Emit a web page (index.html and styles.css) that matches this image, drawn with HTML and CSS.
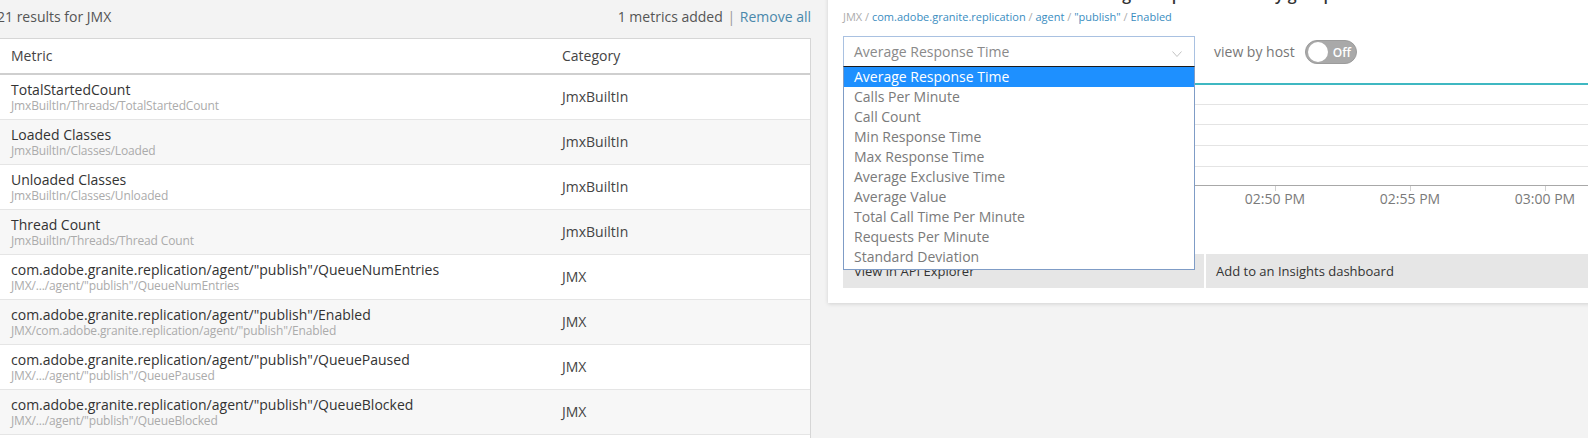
FILE: index.html
```html
<!DOCTYPE html>
<html lang="en">
<head>
<meta charset="utf-8">
<title>Metric explorer</title>
<link rel="stylesheet" href="styles.css">
</head>
<body>
<div class="page">
  <section class="results">
    <div class="results-head">
      <span class="count">21 results for JMX</span>
      <span class="added">1 metrics added <span class="sep">|</span> <a class="remove" href="#">Remove all</a></span>
    </div>
    <div class="metric-table">
      <div class="row head"><div class="cell">Metric</div><div class="cell">Category</div></div>
      <div class="row"><div class="cell name"><div class="title">TotalStartedCount</div><div class="path">JmxBuiltIn/Threads/TotalStartedCount</div></div><div class="cell cat">JmxBuiltIn</div></div>
      <div class="row"><div class="cell name"><div class="title">Loaded Classes</div><div class="path">JmxBuiltIn/Classes/Loaded</div></div><div class="cell cat">JmxBuiltIn</div></div>
      <div class="row"><div class="cell name"><div class="title">Unloaded Classes</div><div class="path">JmxBuiltIn/Classes/Unloaded</div></div><div class="cell cat">JmxBuiltIn</div></div>
      <div class="row"><div class="cell name"><div class="title">Thread Count</div><div class="path">JmxBuiltIn/Threads/Thread Count</div></div><div class="cell cat">JmxBuiltIn</div></div>
      <div class="row"><div class="cell name"><div class="title">com.adobe.granite.replication/agent/"publish"/QueueNumEntries</div><div class="path">JMX/.../agent/"publish"/QueueNumEntries</div></div><div class="cell cat">JMX</div></div>
      <div class="row"><div class="cell name"><div class="title">com.adobe.granite.replication/agent/"publish"/Enabled</div><div class="path">JMX/com.adobe.granite.replication/agent/"publish"/Enabled</div></div><div class="cell cat">JMX</div></div>
      <div class="row"><div class="cell name"><div class="title">com.adobe.granite.replication/agent/"publish"/QueuePaused</div><div class="path">JMX/.../agent/"publish"/QueuePaused</div></div><div class="cell cat">JMX</div></div>
      <div class="row"><div class="cell name"><div class="title">com.adobe.granite.replication/agent/"publish"/QueueBlocked</div><div class="path">JMX/.../agent/"publish"/QueueBlocked</div></div><div class="cell cat">JMX</div></div>
    </div>
  </section>

  <section class="chart-card">
    <h3 class="chart-title">Enabled metric: Average Response Time by group</h3>
    <div class="crumbs">
      <span class="crumb-root">JMX</span> <span class="slash">/</span>
      <a href="#">com.adobe.granite.replication</a> <span class="slash">/</span>
      <a href="#">agent</a> <span class="slash">/</span>
      <a href="#">"publish"</a> <span class="slash">/</span>
      <a href="#">Enabled</a>
    </div>

    <div class="controls">
      <div class="picker">
        <div class="select">
          <span>Average Response Time</span>
          <svg class="chevron" width="10" height="6" viewBox="0 0 10 6"><path d="M0.5 0.5 L5 5.5 L9.5 0.5" fill="none" stroke="#c2c2c2" stroke-width="1"/></svg>
        </div>
        <ul class="options">
          <li class="active">Average Response Time</li>
          <li>Calls Per Minute</li>
          <li>Call Count</li>
          <li>Min Response Time</li>
          <li>Max Response Time</li>
          <li>Average Exclusive Time</li>
          <li>Average Value</li>
          <li>Total Call Time Per Minute</li>
          <li>Requests Per Minute</li>
          <li>Standard Deviation</li>
        </ul>
      </div>
      <span class="host-label">view by host</span>
      <div class="toggle"><span class="knob"></span><span class="toggle-text">Off</span></div>
    </div>

    <svg class="chart" width="760" height="140" viewBox="0 0 760 140">
      <g stroke="#e4e4e4" stroke-width="1">
        <line x1="60" y1="29.5" x2="760" y2="29.5"/>
        <line x1="60" y1="49.5" x2="760" y2="49.5"/>
        <line x1="60" y1="70.5" x2="760" y2="70.5"/>
        <line x1="60" y1="91.5" x2="760" y2="91.5"/>
      </g>
      <line x1="60" y1="110.5" x2="760" y2="110.5" stroke="#a8a8a8" stroke-width="1"/>
      <g stroke="#d0d0d0" stroke-width="1">
        <line x1="297.5" y1="111" x2="297.5" y2="116"/>
        <line x1="432.5" y1="111" x2="432.5" y2="116"/>
        <line x1="567.5" y1="111" x2="567.5" y2="116"/>
        <line x1="702.5" y1="111" x2="702.5" y2="116"/>
      </g>
      <line x1="60" y1="9" x2="760" y2="9" stroke="#3fb8c2" stroke-width="2"/>
      <g class="tick-labels" text-anchor="middle">
        <text x="297" y="128.5">02:45 PM</text>
        <text x="432" y="128.5">02:50 PM</text>
        <text x="567" y="128.5">02:55 PM</text>
        <text x="702" y="128.5">03:00 PM</text>
      </g>
    </svg>

    <div class="actions">
      <button class="action wide">View in API Explorer</button>
      <button class="action">Add to an Insights dashboard</button>
    </div>
  </section>
</div>
</body>
</html>
```

FILE: styles.css
```css
* { box-sizing: border-box; }

html, body {
  margin: 0;
  padding: 0;
  background: #f3f3f3;
  overflow: hidden;
}

body {
  font-family: "Open Sans", "Liberation Sans", sans-serif;
  color: #333;
  width: 1588px;
  height: 438px;
}

.page {
  display: flex;
  align-items: flex-start;
  gap: 17px;
}

/* ---------- results list ---------- */
.results {
  flex: 0 0 815px;
  margin-left: -4px;
}

.results-head {
  display: flex;
  justify-content: space-between;
  padding: 7px 0 11px 1px;
  font-size: 14px;
  line-height: 20px;
  color: #555;
}

.added { color: #555; }
.sep { color: #9a9a9a; margin: 0 1px; }
.remove { color: #4a88ab; text-decoration: none; }

.metric-table {
  background: #fff;
  border: 1px solid #d6d6d6;
  border-bottom: 0;
  padding-bottom: 8px;
}

.row {
  display: grid;
  grid-template-columns: 551px 1fr;
  border-bottom: 1px solid #e5e5e5;
  min-height: 45px;
}

.row:nth-child(odd):not(.head) { background: #f7f7f7; }

.row.head {
  min-height: 0;
  border-bottom: 2px solid #cfcfcf;
  background: #fff;
}

.row.head .cell {
  padding: 7px 0 7px 14px;
  font-size: 14px;
  line-height: 20px;
  color: #444;
}

.cell { padding-left: 14px; }

.cell.name { padding-top: 6px; padding-bottom: 6px; }

.title {
  font-size: 14px;
  line-height: 18px;
  color: #333;
  white-space: nowrap;
}

.path {
  font-size: 12px;
  line-height: 14px;
  letter-spacing: -0.15px;
  color: #ababab;
  white-space: nowrap;
}

.cell.cat {
  display: flex;
  align-items: center;
  font-size: 14px;
  color: #444;
  padding-bottom: 1px;
}

/* ---------- chart card ---------- */
.chart-card {
  flex: 0 0 790px;
  margin-top: -20px;
  background: #fff;
  padding: 4px 15px 15px;
  box-shadow: 0 1px 4px rgba(0, 0, 0, 0.14);
}

.chart-title {
  margin: 0;
  font-size: 16px;
  line-height: 20px;
  font-weight: 600;
  color: #333;
  padding-left: 110px;
  white-space: nowrap;
}

.crumbs {
  margin-top: 6px;
  font-size: 11px;
  line-height: 14px;
  color: #acacac;
  white-space: nowrap;
}

.crumbs a { color: #3a8dbf; text-decoration: none; }

.controls {
  margin-top: 12px;
  display: flex;
  align-items: center;
  height: 30px;
}

.picker {
  position: relative;
  flex: 0 0 352px;
  z-index: 2;
}

.select {
  height: 30px;
  display: flex;
  align-items: center;
  justify-content: space-between;
  padding: 0 12px 0 10px;
  border: 1px solid #a9c1e1;
  border-bottom: 0;
  font-size: 14px;
  color: #8a8a8a;
}

.chevron { margin-top: 5px; }

.options {
  position: absolute;
  left: 0;
  top: 30px;
  width: 352px;
  margin: 0;
  padding: 0 0 2px;
  list-style: none;
  background: #fff;
  border: 1px solid #7f9cc6;
  border-top-color: #1c1c1c;
}

.options li {
  height: 20px;
  line-height: 20px;
  padding-left: 10px;
  font-size: 14px;
  color: #7a7a7a;
}

.options li.active {
  background: #1e90ff;
  color: #fff;
}

.host-label {
  margin-left: 19px;
  font-size: 14px;
  color: #777;
}

.toggle {
  margin-left: 10px;
  width: 52px;
  height: 24px;
  border-radius: 12px;
  background: #a9a9a9;
  border: 1px solid #9c9c9c;
  display: flex;
  align-items: center;
  padding-left: 2px;
  margin-top: 2px;
}

.knob {
  width: 20px;
  height: 20px;
  border-radius: 50%;
  background: #fff;
}

.toggle-text {
  margin-left: 5px;
  font-size: 12px;
  font-weight: 600;
  color: #fff;
}

.chart {
  display: block;
  margin-top: 9px;
}

.tick-labels {
  font-family: "Open Sans", "Liberation Sans", sans-serif;
  font-size: 14px;
  fill: #7a7a7a;
}

.actions {
  margin-top: 39px;
  display: flex;
  gap: 2px;
}

.action {
  height: 34px;
  border: 0;
  background: #e6e6e6;
  font-family: "Open Sans", "Liberation Sans", sans-serif;
  font-size: 13px;
  color: #333;
  text-align: left;
  padding: 0 10px;
  flex: 1;
}

.action.wide { flex: 0 0 361px; padding-left: 11px; }
```
